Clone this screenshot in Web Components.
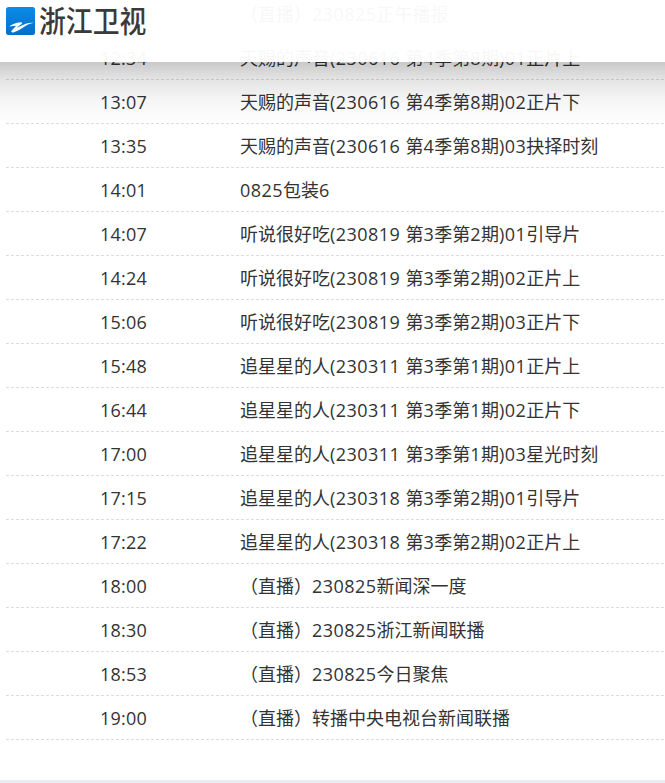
<!DOCTYPE html>
<html lang="zh-CN">
<head>
<meta charset="utf-8">
<title>浙江卫视</title>
<style>
  html, body { margin: 0; height: 783px; overflow: hidden; background: #fff; }
  body { font-family: "Open Sans", "Noto Sans CJK SC", sans-serif; color: #333; }
</style>
</head>
<body>
<tv-page>
  <tv-header slot="header"></tv-header>
  <tv-row time="12:00">（直播）230825正午播报</tv-row>
  <tv-row time="12:34">天赐的声音(230616 第4季第8期)01正片上</tv-row>
  <tv-row time="13:07">天赐的声音(230616 第4季第8期)02正片下</tv-row>
  <tv-row time="13:35">天赐的声音(230616 第4季第8期)03抉择时刻</tv-row>
  <tv-row time="14:01">0825包装6</tv-row>
  <tv-row time="14:07">听说很好吃(230819 第3季第2期)01引导片</tv-row>
  <tv-row time="14:24">听说很好吃(230819 第3季第2期)02正片上</tv-row>
  <tv-row time="15:06">听说很好吃(230819 第3季第2期)03正片下</tv-row>
  <tv-row time="15:48">追星星的人(230311 第3季第1期)01正片上</tv-row>
  <tv-row time="16:44">追星星的人(230311 第3季第1期)02正片下</tv-row>
  <tv-row time="17:00">追星星的人(230311 第3季第1期)03星光时刻</tv-row>
  <tv-row time="17:15">追星星的人(230318 第3季第2期)01引导片</tv-row>
  <tv-row time="17:22">追星星的人(230318 第3季第2期)02正片上</tv-row>
  <tv-row time="18:00">（直播）230825新闻深一度</tv-row>
  <tv-row time="18:30">（直播）230825浙江新闻联播</tv-row>
  <tv-row time="18:53">（直播）230825今日聚焦</tv-row>
  <tv-row time="19:00">（直播）转播中央电视台新闻联播</tv-row>
</tv-page>
<script>
'use strict';

(function() {
  class TvPage extends HTMLElement {
    constructor() {
      super();
      const shadow = this.attachShadow({ mode: 'open' });
      shadow.innerHTML = `
        <style>
          :host { display: block; position: relative; height: 783px; overflow: hidden; }
          .list { display: flex; flex-direction: column; margin-top: -8px; padding: 0 1px 0 6px; }
          .foot { position: absolute; left: 0; right: 0; bottom: 0; height: 3px; background: #ebebf3; }
        </style>
        <slot name="header"></slot>
        <div class="list"><slot></slot></div>
        <div class="foot"></div>
      `;
    }
  }

  class TvHeader extends HTMLElement {
    constructor() {
      super();
      const shadow = this.attachShadow({ mode: 'open' });
      shadow.innerHTML = `
        <style>
          :host {
            display: flex; align-items: center; gap: 4px;
            position: absolute; z-index: 2; top: 0; left: 0; right: 0;
            height: 62px; box-sizing: border-box; padding: 0 0 20px 6px;
            background: rgba(255, 255, 255, .96);
          }
          :host::after {
            content: ''; position: absolute; top: 100%; left: 0; right: 0; height: 62px;
            background: linear-gradient(rgba(0, 0, 0, .21) 0, rgba(0, 0, 0, .11) 17px, rgba(0, 0, 0, .04) 38px, rgba(0, 0, 0, 0) 62px);
            pointer-events: none;
          }
          svg { display: block; flex: none; }
          .name {
            font-size: 30px; line-height: 30px; font-weight: 500; color: #3a3a3a; white-space: nowrap;
            transform: scaleX(.895); transform-origin: left center;
          }
        </style>
        <svg width="29" height="28" viewBox="0 0 29 28">
          <defs>
            <linearGradient id="g" x1="0" y1="0" x2="0" y2="1">
              <stop offset="0" stop-color="#0b8ce8"/>
              <stop offset="1" stop-color="#056fc9"/>
            </linearGradient>
          </defs>
          <rect width="29" height="28" rx="2.5" fill="url(#g)"/>
          <path d="M3 19.5C6 17.2 10 15.6 14.5 15.2C16.5 15.1 16.8 16.2 15.2 17.3C13.5 18.5 12 19.6 10.8 20.8C14 19.8 17.5 17.6 20.5 16.6C22.8 15.9 25 15.6 28 15.8C24.8 16.4 22 17.4 19.5 18.9C16 21 12 24 8 25.2C5.5 25.9 4.6 24.8 6 23.3C7.4 21.8 8.8 20.3 10.2 18.8C7.8 18.8 5.3 19.1 3 19.5Z" fill="#fff"/>
        </svg>
        <span class="name">浙江卫视</span>
      `;
    }
  }

  class TvRow extends HTMLElement {
    constructor() {
      super();
      const shadow = this.attachShadow({ mode: 'open' });
      shadow.innerHTML = `
        <style>
          :host {
            display: grid; grid-template-columns: 234px 1fr;
            height: 44px; box-sizing: border-box; padding-top: 1px;
            border-bottom: 1px dashed #ddd;
            font-size: 18px; line-height: 42px; color: #333;
          }
          .time { text-align: center; letter-spacing: .2px; padding-left: 1px; }
          .title { white-space: nowrap; }
          ::slotted(span) { letter-spacing: .46px; }
        </style>
        <div class="time"></div>
        <div class="title"><slot></slot></div>
      `;
      shadow.querySelector('.time').textContent = this.getAttribute('time');
    }

    // latin runs sit a little wider than the font gives them
    connectedCallback() {
      this.innerHTML = this.textContent.replace(/[\x20-\x7e]+/g, run => `<span>${run}</span>`);
    }
  }

  customElements.define('tv-header', TvHeader);
  customElements.define('tv-row', TvRow);
  customElements.define('tv-page', TvPage);
})();
</script>
</body>
</html>
